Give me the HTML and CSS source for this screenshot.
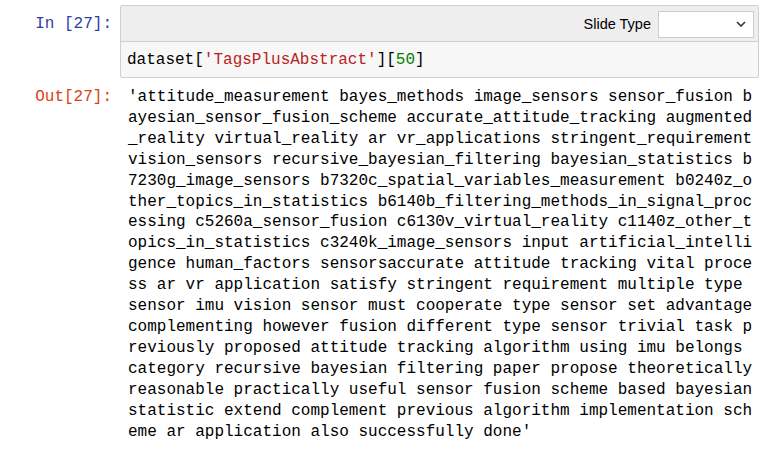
FILE: index.html
```html
<!DOCTYPE html>
<html>
<head>
<meta charset="utf-8">
<link rel="stylesheet" href="styles.css">
</head>
<body>
<div class="notebook">
  <div class="cell-row">
    <div class="prompt in-prompt">In&nbsp;[27]:</div>
    <div class="input-box">
      <div class="celltoolbar">
        <span class="toolbar-label">Slide Type</span>
        <div class="select-box">
          <svg class="chevron" width="10" height="6" viewBox="0 0 10 6"><polyline points="1,1 5,5 9,1" fill="none" stroke="#333" stroke-width="1.6"/></svg>
        </div>
      </div>
      <div class="code-area"><span class="n">dataset</span><span class="p">[</span><span class="s">'TagsPlusAbstract'</span><span class="p">][</span><span class="m">50</span><span class="p">]</span></div>
    </div>
  </div>
  <div class="cell-row out-row">
    <div class="prompt out-prompt">Out[27]:</div>
    <div class="output-text">'attitude_measurement bayes_methods image_sensors sensor_fusion bayesian_sensor_fusion_scheme accurate_attitude_tracking augmented_reality virtual_reality ar vr_applications stringent_requirement vision_sensors recursive_bayesian_filtering bayesian_statistics b7230g_image_sensors b7320c_spatial_variables_measurement b0240z_other_topics_in_statistics b6140b_filtering_methods_in_signal_processing c5260a_sensor_fusion c6130v_virtual_reality c1140z_other_topics_in_statistics c3240k_image_sensors input artificial_intelligence human_factors sensorsaccurate attitude tracking vital process ar vr application satisfy stringent requirement multiple type sensor imu vision sensor must cooperate type sensor set advantage complementing however fusion different type sensor trivial task previously proposed attitude tracking algorithm using imu belongs category recursive bayesian filtering paper propose theoretically reasonable practically useful sensor fusion scheme based bayesian statistic extend complement previous algorithm implementation scheme ar application also successfully done'</div>
  </div>
</div>
</body>
</html>
```
FILE: styles.css
```css
html, body {
  margin: 0;
  padding: 0;
  background: #ffffff;
}
.notebook {
  padding-top: 5px;
  width: 781px;
  font-family: "Liberation Mono", "DejaVu Sans Mono", monospace;
  font-size: 16px;
  color: #000;
}
.cell-row {
  display: flex;
  align-items: flex-start;
}
.prompt {
  width: 120px;
  flex: none;
  box-sizing: border-box;
  text-align: right;
  padding-right: 8px;
  line-height: 21px;
  white-space: nowrap;
}
.in-prompt {
  color: #303F9F;
  padding-top: 9px;
}
.out-prompt {
  color: #D84315;
}
.input-box {
  width: 639px;
  box-sizing: border-box;
  border: 1px solid #cfcfcf;
  border-radius: 2px;
  background: #f7f7f7;
}
.celltoolbar {
  height: 35px;
  background: #eeeeee;
  border-bottom: 1px solid #cfcfcf;
  display: flex;
  align-items: center;
  justify-content: flex-end;
  padding-right: 4px;
  gap: 7px;
}
.toolbar-label {
  font-family: "Liberation Sans", Arial, sans-serif;
  font-size: 14.5px;
  color: #000;
  padding-top: 1px;
}
.select-box {
  width: 96px;
  height: 27px;
  box-sizing: border-box;
  margin-top: 1px;
  background: #fff;
  border: 1px solid #cccccc;
  display: flex;
  align-items: center;
  justify-content: flex-end;
  padding-right: 7px;
}
.chevron {
  display: block;
}
.code-area {
  height: 35px;
  box-sizing: border-box;
  padding: 8px 6px 6px 6px;
  line-height: 21px;
  white-space: pre;
}
.code-area .s { color: #BA2121; }
.code-area .m { color: #008000; }
.code-area .p { color: #000; }
.out-row {
  margin-top: 9px;
}
.out-row .prompt {
  line-height: 20.9px;
}
.output-text {
  width: 630px;
  padding-left: 8px;
  line-height: 20.9px;
  white-space: pre-wrap;
  word-break: break-all;
}
```
